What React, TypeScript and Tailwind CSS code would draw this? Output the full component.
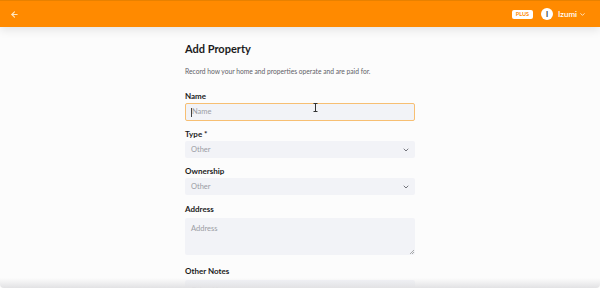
import { ArrowLeft, ChevronDown } from "lucide-react";

function Label({ children, gap = 2 }: { children: React.ReactNode; gap?: number }) {
  return (
    <div
      className={`text-[8px] font-bold text-[#1b1b1b] leading-[10px] ${gap === 4 ? "mb-[4px]" : "mb-[2px]"}`}
    >
      {children}
    </div>
  );
}

function SelectBox({ value }: { value: string }) {
  return (
    <div className="h-[17px] rounded-[2px] bg-[#f2f3f7] flex items-center justify-between pl-[6px] pr-[5px]">
      <span className="text-[7.5px] text-[#9a9ca3]">{value}</span>
      <ChevronDown size={8} strokeWidth={2.5} className="text-[#5a5c63]" />
    </div>
  );
}

export default function App() {
  return (
    <div
      className="relative w-[600px] h-[288px] overflow-hidden bg-[#fcfcfc]"
      style={{ fontFamily: "Lato, 'Open Sans', sans-serif" }}
    >
      <header className="h-[27px] bg-[#ff8a00] border-t border-[#e88100] flex items-center justify-between pl-[10px] pr-[14px] shadow-[0_3px_10px_rgba(0,0,0,0.1)] relative z-10">
        <ArrowLeft size={9} strokeWidth={3} className="text-[#ffe6bf]" />
        <div className="flex items-center">
          <span className="bg-white text-[#ff8a00] text-[5.5px] font-bold px-[4px] h-[9px] leading-[9px] rounded-[2px] mr-[8px]">
            PLUS
          </span>
          <span className="w-[12px] h-[12px] rounded-full bg-white flex items-center justify-center text-[7px] font-bold text-[#333] mr-[5px]">
            I
          </span>
          <span className="text-white text-[8px] font-semibold">Izumi</span>
          <ChevronDown size={7} strokeWidth={2.5} className="text-white ml-[2px]" />
        </div>
      </header>

      <main className="w-[230px] mx-auto pt-[16px]">
        <h1 className="text-[11px] font-bold text-[#1b1b1b] leading-[12px]">Add Property</h1>
        <p className="text-[6.7px] text-[#5f6167] mt-[12px] leading-[8px]">
          Record how your home and properties operate and are paid for.
        </p>

        <div className="mt-[16px]">
          <Label>Name</Label>
          <div className="relative h-[18px] rounded-[2px] border border-[#f7bf73] bg-[#f2f3f7] flex items-center pl-[5px]">
            <span className="w-[1px] h-[9px] bg-[#444]" />
            <span className="text-[7.5px] text-[#9a9ca3]">Name</span>
            <svg className="absolute left-[127px] top-[-1px]" width="5" height="9" viewBox="0 0 5 9">
              <path d="M0.5 0.5 H4.5 M2.5 0.5 V8.5 M0.5 8.5 H4.5" stroke="#333" strokeWidth="1" fill="none" />
            </svg>
          </div>
        </div>

        <div className="mt-[8px]">
          <Label>Type *</Label>
          <SelectBox value="Other" />
        </div>

        <div className="mt-[8px]">
          <Label>Ownership</Label>
          <SelectBox value="Other" />
        </div>

        <div className="mt-[9px]">
          <Label gap={4}>Address</Label>
          <div className="relative h-[37px] rounded-[2px] bg-[#f2f3f7] pl-[6px] pt-[2px] leading-[10px]">
            <span className="text-[7.5px] text-[#9a9ca3]">Address</span>
            <svg className="absolute right-[1px] bottom-[1px]" width="4" height="4" viewBox="0 0 4 4">
              <path d="M4 0 L0 4 M4 2 L2 4" stroke="#888" strokeWidth="0.7" />
            </svg>
          </div>
        </div>

        <div className="mt-[11px]">
          <Label gap={4}>Other Notes</Label>
          <div className="h-[30px] rounded-[2px] bg-[#f2f3f7] pl-[6px] pt-[2px] leading-[10px]">
            <span className="text-[7.5px] text-[#9a9ca3]">Other Notes</span>
          </div>
        </div>
      </main>

      <div className="absolute left-0 right-0 bottom-0 h-[10px] bg-gradient-to-b from-transparent to-[#e2e2e4] rounded-b-[4px]" />
    </div>
  );
}
